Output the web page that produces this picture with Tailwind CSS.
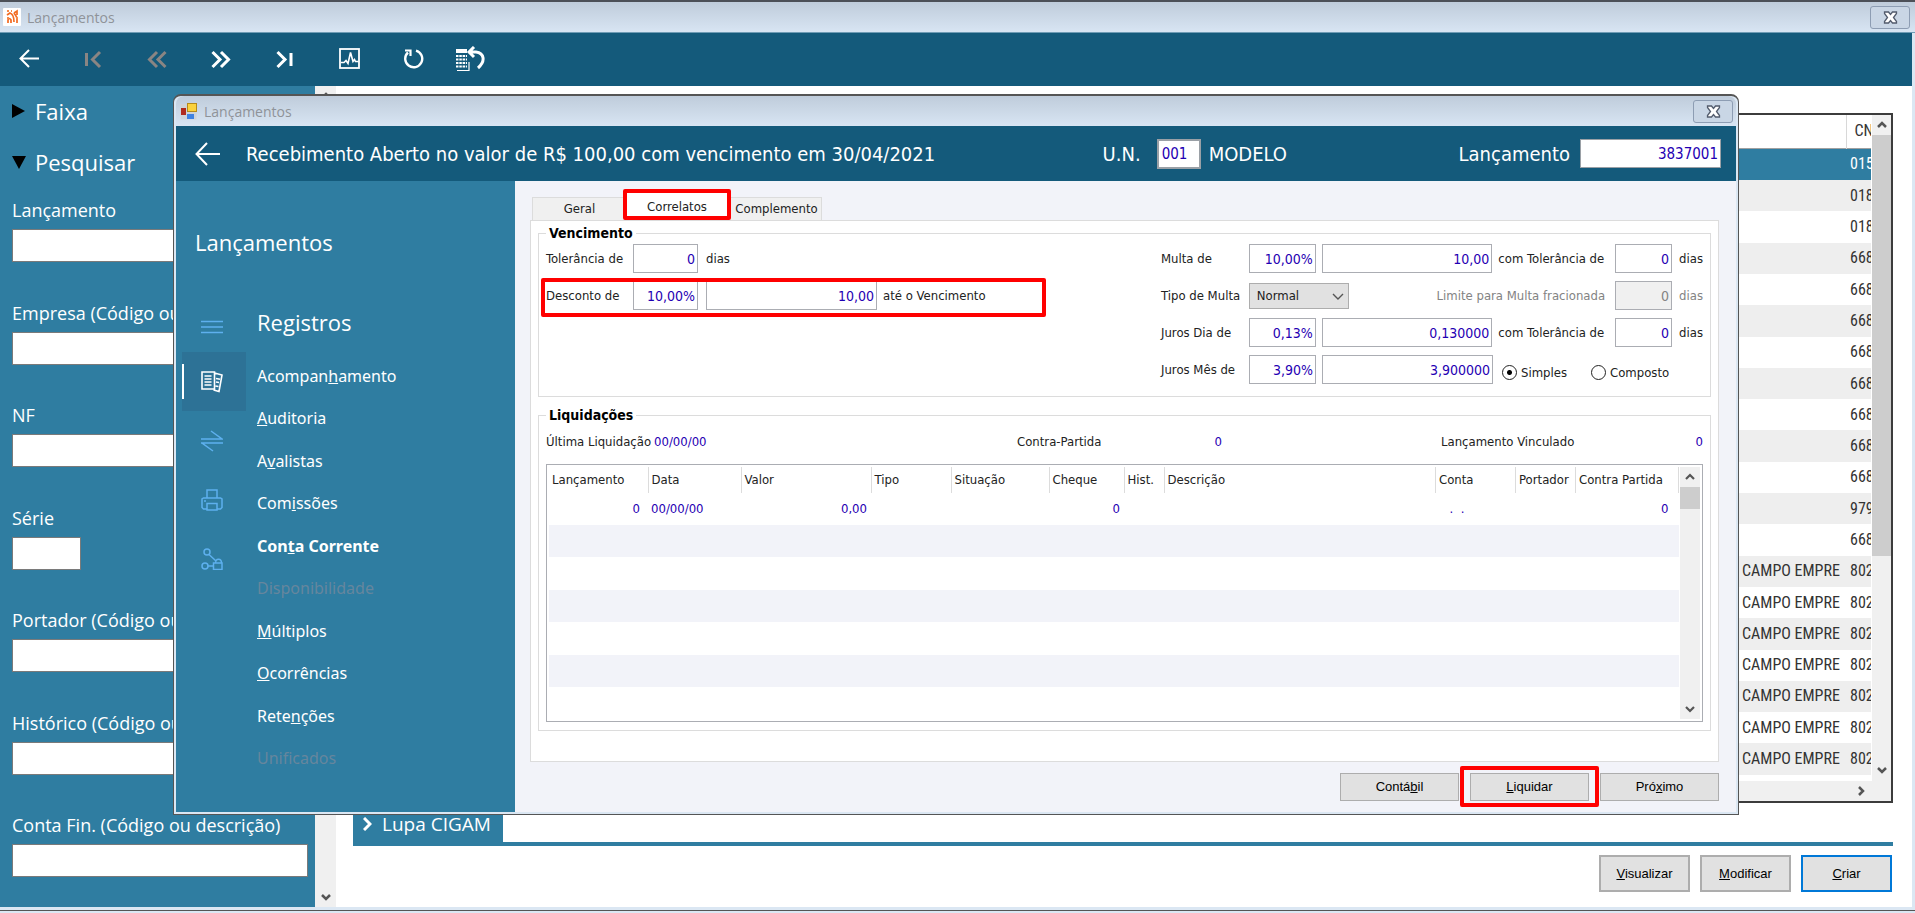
<!DOCTYPE html>
<html lang="pt-br">
<head>
    <meta charset="UTF-8">
    <meta name="viewport" content="width=device-width, initial-scale=1.0">
    <title>Lançamentos</title>
    <script src="https://cdn.jsdelivr.net/npm/@tailwindcss/browser@4"></script>
</head>
<body class="relative flex h-screen flex-col overflow-hidden bg-[#dbe7f3] font-['Open_Sans',sans-serif]">

    <!-- Janela principal -->
    <header class="flex h-[33px] shrink-0 items-center border-t-2 border-b border-t-[#4c5058] border-b-[#6f9cb5] bg-linear-to-b from-[#bfccdb] to-[#d8e5f3] pr-[5px] pl-[3px] text-sm text-[#8f9399]">
        <svg class="mr-[6px] h-[18px] w-[18px]" viewBox="0 0 18 18" fill="none">
            <rect width="18" height="18" rx="1" fill="#fff"/>
            <path d="M4 7l3-2c3 1 4 4 4 9M5 15v-3c0-2 2-2 3 0v3M14 15v-4c0-3-2-4-3-6M11 5l3-2v4" stroke="#f26a21" stroke-width="1.700"/>
            <path d="M4 3h2M4 10h2M8 3h1M14 9v2" stroke="#f58a4b" stroke-width="2"/>
        </svg>
        <h1 class="pt-[2px]">Lançamentos</h1>
        <button type="button" aria-label="Fechar" class="ml-auto flex h-[23px] w-[40px] items-center justify-center rounded-[3px] border border-[#8d9db3] bg-[#c9d6e5]">
            <svg class="h-[13px] w-[15px]" viewBox="0 0 15 13"><path d="M1.500 1h4l2 2.500 2-2.500h4v1.500L10.500 6.500l3 4V12h-4l-2-2.500-2 2.500h-4v-1.500l3-4-3-4z" fill="#fff" stroke="#525b6c" stroke-width="1.300"/></svg>
        </button>
    </header>

    <nav class="mr-[3px] flex h-[53px] shrink-0 items-center bg-[#145a7b] pb-[2px] text-white">
        <button type="button" aria-label="Voltar" class="flex w-[61px] justify-center pr-[3px]">
            <svg class="h-5 w-5" viewBox="0 0 20 20" fill="none" stroke="currentColor" stroke-width="2"><path d="M20 9.500H1.500M10 1L1.500 9.500 10 18"/></svg>
        </button>
        <button type="button" aria-label="Primeiro" disabled class="flex w-16 justify-center text-[#8a8583]">
            <svg class="h-5 w-5" viewBox="0 0 20 20" fill="none" stroke="currentColor" stroke-width="3"><path d="M3.500 4v13M17 3l-7.500 7.500L17 18"/></svg>
        </button>
        <button type="button" aria-label="Anterior" disabled class="flex w-16 justify-center text-[#8a8583]">
            <svg class="h-5 w-5" viewBox="0 0 20 20" fill="none" stroke="currentColor" stroke-width="3"><path d="M10 3l-7.500 7.500L10 18M18.500 3L11 10.500l7.500 7.500"/></svg>
        </button>
        <button type="button" aria-label="Seguinte" class="flex w-16 justify-center">
            <svg class="h-5 w-5" viewBox="0 0 20 20" fill="none" stroke="currentColor" stroke-width="3"><path d="M1.500 3L9 10.500 1.500 18M10 3l7.500 7.500L10 18"/></svg>
        </button>
        <button type="button" aria-label="Último" class="flex w-16 justify-center">
            <svg class="h-5 w-5" viewBox="0 0 20 20" fill="none" stroke="currentColor" stroke-width="3"><path d="M2.500 3l7.500 7.500L2.500 18M16 4v13"/></svg>
        </button>
        <button type="button" aria-label="Gráfico" class="flex w-16 justify-center">
            <svg class="h-[21px] w-[21px]" viewBox="0 0 21 21" fill="none" stroke="currentColor"><rect x="1" y="1" width="19" height="19" stroke-width="1.800"/><path d="M2 14.500h3l2-2 2 3 2.500-11 2.500 9 1.500-2 1 2h3" stroke-width="1.600"/></svg>
        </button>
        <button type="button" aria-label="Atualizar" class="flex w-16 justify-center">
            <svg class="h-[21px] w-[21px]" viewBox="0 0 21 21" fill="none" stroke="currentColor"><path d="M13 2.600A8.500 8.500 0 1 1 5 4.500" stroke-width="2.400"/><path d="M2 2.500h5.500V8" stroke-width="2.200"/></svg>
        </button>
        <button type="button" aria-label="Desfazer" class="flex w-[50px] justify-center">
            <svg class="h-[26px] w-[31px]" viewBox="0 0 31 26" fill="none" stroke="currentColor"><path d="M1 5h11" stroke-width="4"/><path d="M1 10h11M1 13.500h11M1 17h11M1 20.500h11" stroke-width="2" stroke-dasharray="2.500 .8"/><path d="M2 24.500h12V16" stroke-width="1.200"/><path d="M19 1l-5 5 5 5M14 6h7c8 1 10 9 2 16" stroke-width="3"/></svg>
        </button>
    </nav>

    <div class="mr-[3px] mb-[6px] flex min-h-0 flex-1 bg-white">
        <!-- Filtros -->
        <aside class="flex w-[315px] shrink-0 flex-col bg-[#2f7da1] px-3 pt-[10px] pb-[30px] text-white">
            <button type="button" class="flex items-center text-[22px] leading-[30px]">
                <svg class="mr-[9px] h-[14px] w-[14px]" viewBox="0 0 14 14"><path d="M0 0l13 7-13 7z"/></svg>
                Faixa
            </button>
            <button type="button" class="mt-[21px] flex items-center text-[22px] leading-[30px]">
                <svg class="mr-[9px] h-[14px] w-[14px]" viewBox="0 0 14 14"><path d="M0 1h14l-7 13z"/></svg>
                Pesquisar
            </button>
            <form class="mt-[21px] flex min-h-0 flex-1 flex-col justify-between text-lg leading-6">
                <div>
                    <label for="f-lanc" class="block">Lançamento</label>
                    <input id="f-lanc" type="text" class="mt-[7px] block h-[33px] w-[296px] border border-[#7a7a7a] bg-white">
                </div>
                <div>
                    <label for="f-emp" class="block">Empresa (Código ou nome)</label>
                    <input id="f-emp" type="text" class="mt-[7px] block h-[33px] w-[296px] border border-[#7a7a7a] bg-white">
                </div>
                <div>
                    <label for="f-nf" class="block">NF</label>
                    <input id="f-nf" type="text" class="mt-[7px] block h-[33px] w-[296px] border border-[#7a7a7a] bg-white">
                </div>
                <div>
                    <label for="f-serie" class="block">Série</label>
                    <input id="f-serie" type="text" class="mt-[7px] block h-[33px] w-[69px] border border-[#7a7a7a] bg-white">
                </div>
                <div>
                    <label for="f-port" class="block">Portador (Código ou descrição)</label>
                    <input id="f-port" type="text" class="mt-[7px] block h-[33px] w-[296px] border border-[#7a7a7a] bg-white">
                </div>
                <div>
                    <label for="f-hist" class="block">Histórico (Código ou descrição)</label>
                    <input id="f-hist" type="text" class="mt-[7px] block h-[33px] w-[296px] border border-[#7a7a7a] bg-white">
                </div>
                <div>
                    <label for="f-conta" class="block">Conta Fin. (Código ou descrição)</label>
                    <input id="f-conta" type="text" class="mt-[7px] block h-[33px] w-[296px] border border-[#7a7a7a] bg-white">
                </div>
            </form>
        </aside>
        <div class="flex w-[21px] shrink-0 flex-col items-center justify-between bg-[#f0f0f0] py-[5px] text-[#555]">
            <svg class="h-[10px] w-[10px]" viewBox="0 0 10 10" fill="none" stroke="currentColor" stroke-width="2.500"><path d="M1 7l4-4 4 4"/></svg>
            <svg class="h-[10px] w-[10px]" viewBox="0 0 10 10" fill="none" stroke="currentColor" stroke-width="2.500"><path d="M1 3l4 4 4-4"/></svg>
        </div>

        <main class="flex min-w-0 flex-1 flex-col pt-[27px] pr-[19px] pl-[17px]">
            <div class="flex min-h-0 flex-1 flex-col border-2 border-[#3c3c3c]">
                <div class="flex min-h-0 flex-1">
                    <div class="min-w-0 flex-1 overflow-hidden">
                        <table class="h-[660px] w-full table-fixed border-collapse font-['Roboto_Condensed','Liberation_Sans',sans-serif] text-base leading-5 whitespace-nowrap text-[#333]">
                            <colgroup><col><col class="w-[119px]"><col class="w-[25px]"></colgroup>
                            <thead>
                                <tr class="h-[33px] border-b border-[#a0a0a0]"><th></th><th></th><th class="overflow-hidden border-l border-[#d8d8d8] pl-2 text-left font-normal">CNPJ</th></tr>
                            </thead>
                            <tbody id="grid-rows"></tbody>
                        </table>
                    </div>
                    <div class="ml-px flex w-[19px] shrink-0 flex-col items-center bg-[#f0f0f0] text-[#555]">
                        <svg class="my-[5px] h-[10px] w-[10px] shrink-0" viewBox="0 0 10 10" fill="none" stroke="currentColor" stroke-width="2.500"><path d="M1 7l4-4 4 4"/></svg>
                        <div class="h-[421px] w-full bg-[#cdcdcd]"></div>
                        <svg class="mt-auto mb-[6px] h-[10px] w-[10px]" viewBox="0 0 10 10" fill="none" stroke="currentColor" stroke-width="2.500"><path d="M1 3l4 4 4-4"/></svg>
                    </div>
                </div>
                <div class="flex h-5 shrink-0 items-center justify-end bg-[#f0f0f0] pr-[25px] text-[#555]">
                    <svg class="h-[10px] w-[10px]" viewBox="0 0 10 10" fill="none" stroke="currentColor" stroke-width="2.500"><path d="M3 1l4 4-4 4"/></svg>
                </div>
            </div>
            <div class="mt-2 flex h-[35px] shrink-0 border-b-4 border-[#2f7da1]">
                <button type="button" class="flex w-[150px] items-center bg-[#2f7da1] pb-[6px] pl-[10px] text-[19px] leading-6 text-white">
                    <svg class="mr-[10px] h-[14px] w-[9px]" viewBox="0 0 9 14" fill="none" stroke="currentColor" stroke-width="3"><path d="M1 1l6 6-6 6"/></svg>
                    Lupa CIGAM
                </button>
            </div>
            <div class="mt-[9px] mb-[15px] flex h-[37px] shrink-0 justify-end gap-[10px] pr-px font-['Liberation_Sans',sans-serif] text-[13px]">
                <button type="button" class="w-[91px] border-2 border-[#adadad] bg-[#e1e1e1]"><u>V</u>isualizar</button>
                <button type="button" class="w-[91px] border-2 border-[#adadad] bg-[#e1e1e1]"><u>M</u>odificar</button>
                <button type="button" class="w-[91px] border-2 border-[#0078d7] bg-[#e1e1e1]"><u>C</u>riar</button>
            </div>
        </main>
    </div>
    <div class="absolute inset-x-0 bottom-[2px] h-px bg-[#555]"></div>

    <!-- Janela do lançamento -->
    <section class="absolute top-[94px] right-[176px] bottom-[98px] left-[173px] flex flex-col rounded-t-lg border border-t-2 border-[#555] bg-[#dbe7f3] px-[2px] pb-[2px] text-white">
        <header class="flex h-[30px] shrink-0 items-center pr-[3px] pl-1 text-sm text-[#8f9399] rounded-t-lg bg-linear-to-b from-[#bfccdb] to-[#d8e5f3]">
            <svg class="mr-[7px] h-[17px] w-[17px]" viewBox="0 0 17 17"><rect x=".5" y="1" width="16" height="15.500" fill="#cfd3d8"/><rect x="7" y="0" width="10" height="9" fill="#b58a1a"/><rect x="8" y="1" width="8" height="7" fill="#fbd23c"/><rect x="1" y="5" width="5" height="7" fill="#b02a1c"/><rect x="7" y="11" width="7" height="5" fill="#3f82e0"/></svg>
            <h2 class="pt-[2px]">Lançamentos</h2>
            <button type="button" aria-label="Fechar" class="ml-auto flex h-[23px] w-[40px] items-center justify-center rounded-[3px] border border-[#8d9db3] bg-[#c9d6e5]">
                <svg class="h-[13px] w-[15px]" viewBox="0 0 15 13"><path d="M1.500 1h4l2 2.500 2-2.500h4v1.500L10.500 6.500l3 4V12h-4l-2-2.500-2 2.500h-4v-1.500l3-4-3-4z" fill="#fff" stroke="#525b6c" stroke-width="1.300"/></svg>
            </button>
        </header>

        <div class="flex h-[55px] shrink-0 items-center bg-[#145a7b] pr-[15px] pl-[19px] font-['DejaVu_Sans_Condensed','DejaVu_Sans',sans-serif] text-xl">
            <button type="button" aria-label="Voltar">
                <svg class="h-6 w-[25px]" viewBox="0 0 25 24" fill="none" stroke="currentColor" stroke-width="2"><path d="M25 12H1.500M12 1L1.500 12 12 23"/></svg>
            </button>
            <span class="ml-[26px]">Recebimento Aberto no valor de R$ 100,00 com vencimento em 30/04/2021</span>
            <div class="ml-auto flex w-[356px] items-center">
                <label for="un">U.N.</label>
                <input id="un" type="text" value="001" class="ml-4 h-[30px] w-[44px] border-2 border-[#9aa0a6] bg-white px-[3px] text-[15px] text-[#1f00b3]">
                <span class="ml-2">MODELO</span>
            </div>
            <label for="lanc">Lançamento</label>
            <input id="lanc" type="text" value="3837001" class="ml-[10px] h-[29px] w-[141px] border border-[#9aa0a6] bg-white px-[2px] text-right text-[15px] text-[#1f00b3]">
        </div>

        <div class="flex min-h-0 flex-1">
            <aside class="flex w-[339px] shrink-0 flex-col bg-[#2f7da1]">
                <h3 class="mt-[45px] ml-[19px] text-[22px] leading-8">Lançamentos</h3>
                <div class="mt-[40px] flex pl-[6px]">
                    <div class="flex w-[64px] flex-col text-[#5eb0ee]">
                        <button type="button" aria-label="Menu" class="flex h-[54px] items-center pl-[19px] pt-[4px]">
                            <svg class="h-[22px] w-[22px]" viewBox="0 0 22 22" fill="none" stroke="currentColor" stroke-width="1.500"><path d="M0 5.500h22M0 11h22M0 16.500h22"/></svg>
                        </button>
                        <button type="button" aria-label="Registros" class="flex h-[59px] items-center bg-[#2d7296] text-white">
                            <span class="h-[35px] w-[2px] bg-white"></span>
                            <svg class="ml-[17px] h-[22px] w-[22px]" viewBox="0 0 22 22" fill="none" stroke="currentColor" stroke-width="1.600"><path d="M1 1h12.500v17H1zM3.500 5h7M3.500 8h7M3.500 11h7M3.500 14h7M13.500 2l7.500 2L18 20.500l-5.500-1.500M15 7.500l4 .700M15 11l3 .500M14.500 15l3 .500"/></svg>
                        </button>
                        <button type="button" aria-label="Movimentos" class="flex h-[59px] items-center pl-[19px]">
                            <svg class="h-[22px] w-[22px]" viewBox="0 0 22 22" fill="none" stroke="currentColor" stroke-width="1.500"><path d="M0 9h21L10 1M0 13h22M22 13H1l11 8"/></svg>
                        </button>
                        <button type="button" aria-label="Imprimir" class="flex h-[59px] items-center pl-[19px]">
                            <svg class="h-[22px] w-[22px]" viewBox="0 0 22 22" fill="none" stroke="currentColor" stroke-width="1.500"><path d="M6 9V1h10v8M6 20H2.500L1 18.500V10l1.500-1h17L21 10v8.500L19.500 20H16M6 14.500h10V21H6zM3 12h2"/></svg>
                        </button>
                        <button type="button" aria-label="Vínculos" class="flex h-[59px] items-center pl-[19px]">
                            <svg class="h-[22px] w-[22px]" viewBox="0 0 22 22" fill="none" stroke="currentColor" stroke-width="1.500"><circle cx="6" cy="4" r="3"/><circle cx="4" cy="18" r="3"/><path d="M8 6.500l7 6.500M7 18h5.500M12.500 15H21v6.500h-8.500zM14.500 15c0-5 6-5 6 0"/></svg>
                        </button>
                    </div>
                    <div class="ml-[11px] flex flex-col">
                        <h4 class="mt-[8px] text-[22px] leading-8">Registros</h4>
                        <ul class="mt-[26px] flex h-[406px] flex-col justify-between font-['Noto_Sans','Open_Sans',sans-serif] text-base leading-6">
                            <li><a href="#">Acompan<u>h</u>amento</a></li>
                            <li><a href="#"><u>A</u>uditoria</a></li>
                            <li><a href="#">A<u>v</u>alistas</a></li>
                            <li><a href="#">Com<u>i</u>ssões</a></li>
                            <li><a href="#" class="font-bold">Con<u>t</u>a Corrente</a></li>
                            <li><a href="#" class="text-[#66869d]">Disponibilidade</a></li>
                            <li><a href="#"><u>M</u>últiplos</a></li>
                            <li><a href="#"><u>O</u>corrências</a></li>
                            <li><a href="#">Rete<u>n</u>ções</a></li>
                            <li><a href="#" class="text-[#66869d]">Unificados</a></li>
                        </ul>
                    </div>
                </div>
            </aside>

            <div class="flex min-w-0 flex-1 flex-col bg-[#f2f3f9] pr-[17px] pl-[15px] font-['DejaVu_Sans_Condensed','DejaVu_Sans',sans-serif] text-[13px] leading-5 text-[#222]">
                <div class="flex h-[39px] shrink-0 items-end pl-[2px]">
                    <button type="button" class="h-[23px] w-[95px] border border-b-0 border-[#dcdcdc] bg-[#f0f0f0]">Geral</button>
                    <div class="relative h-[27px] w-[100px]">
                        <button type="button" class="h-full w-full bg-white">Correlatos</button>
                        <div class="absolute -inset-x-1 -top-1 bottom-0 rounded-[2px] border-4 border-[#ff0000]"></div>
                    </div>
                    <button type="button" class="h-[23px] w-[95px] border border-b-0 border-[#dcdcdc] bg-[#f0f0f0] pl-1">Complemento</button>
                </div>

                <div class="flex min-h-0 flex-1 flex-col border border-[#dcdcdc] bg-white px-[7px] pt-[2px] pb-[30px]">
                    <fieldset class="relative h-[174px] shrink-0 border border-[#dcdcdc] pr-[7px] pl-[7px]">
                        <legend class="px-[3px] text-sm leading-5 font-bold text-black">Vencimento</legend>
                        <div class="flex pt-px">
                            <div class="flex flex-col gap-2">
                                <div class="flex h-[29px] items-center">
                                    <label for="tol" class="w-[87px]">Tolerância de</label>
                                    <input id="tol" type="text" value="0" class="h-[29px] w-[65px] border border-[#abadb3] bg-white px-[2px] text-right text-sm text-[#1f00b3]">
                                    <span class="ml-2">dias</span>
                                </div>
                                <div class="flex h-[29px] items-center">
                                    <label for="desc" class="w-[87px]">Desconto de</label>
                                    <input id="desc" type="text" value="10,00%" class="h-[29px] w-[65px] border border-[#abadb3] bg-white px-[2px] text-right text-sm text-[#1f00b3]">
                                    <input type="text" value="10,00" aria-label="Valor do desconto" class="ml-2 h-[29px] w-[171px] border border-[#abadb3] bg-white px-[2px] text-right text-sm text-[#1f00b3]">
                                    <span class="ml-[6px]">até o Vencimento</span>
                                </div>
                            </div>
                            <div class="ml-auto flex w-[542px] flex-col gap-2">
                                <div class="flex h-[29px] items-center">
                                    <label for="multa" class="w-[88px]">Multa de</label>
                                    <input id="multa" type="text" value="10,00%" class="h-[29px] w-[67px] border border-[#abadb3] bg-white px-[2px] text-right text-sm text-[#1f00b3]">
                                    <input type="text" value="10,00" aria-label="Valor da multa" class="ml-[6px] h-[29px] w-[171px] border border-[#abadb3] bg-white px-[2px] text-right text-sm text-[#1f00b3]">
                                    <label for="multa-tol" class="ml-[6px] w-[117px]">com Tolerância de</label>
                                    <input id="multa-tol" type="text" value="0" class="h-[29px] w-[57px] border border-[#abadb3] bg-white px-[2px] text-right text-sm text-[#1f00b3]">
                                    <span class="ml-[7px]">dias</span>
                                </div>
                                <div class="flex h-[29px] items-center">
                                    <label for="tipo" class="w-[88px]">Tipo de Multa</label>
                                    <div class="relative">
                                        <select id="tipo" class="block h-[26px] w-[100px] appearance-none border border-[#adadad] bg-[#e1e1e1] px-[7px]"><option>Normal</option></select>
                                        <svg class="pointer-events-none absolute top-[10px] right-[5px] h-[7px] w-3" viewBox="0 0 12 7" fill="none" stroke="#555" stroke-width="1.400"><path d="M1 1l5 5 5-5"/></svg>
                                    </div>
                                    <label for="limite" class="w-[267px] pr-[10px] text-right text-[#838383]">Limite para Multa fracionada</label>
                                    <input id="limite" type="text" value="0" disabled class="h-[29px] w-[57px] border border-[#abadb3] bg-[#f0f0f0] px-[2px] text-right text-sm text-[#838383]">
                                    <span class="ml-[7px] text-[#838383]">dias</span>
                                </div>
                                <div class="flex h-[29px] items-center">
                                    <label for="jdia" class="w-[88px]">Juros Dia de</label>
                                    <input id="jdia" type="text" value="0,13%" class="h-[29px] w-[67px] border border-[#abadb3] bg-white px-[2px] text-right text-sm text-[#1f00b3]">
                                    <input type="text" value="0,130000" aria-label="Juros por dia" class="ml-[6px] h-[29px] w-[171px] border border-[#abadb3] bg-white px-[2px] text-right text-sm text-[#1f00b3]">
                                    <label for="jdia-tol" class="ml-[6px] w-[117px]">com Tolerância de</label>
                                    <input id="jdia-tol" type="text" value="0" class="h-[29px] w-[57px] border border-[#abadb3] bg-white px-[2px] text-right text-sm text-[#1f00b3]">
                                    <span class="ml-[7px]">dias</span>
                                </div>
                                <div class="flex h-[29px] items-center">
                                    <label for="jmes" class="w-[88px]">Juros Mês de</label>
                                    <input id="jmes" type="text" value="3,90%" class="h-[29px] w-[67px] border border-[#abadb3] bg-white px-[2px] text-right text-sm text-[#1f00b3]">
                                    <input type="text" value="3,900000" aria-label="Juros por mês" class="ml-[6px] h-[29px] w-[171px] border border-[#abadb3] bg-white px-[2px] text-right text-sm text-[#1f00b3]">
                                    <label class="ml-[9px] flex w-[89px] items-center gap-1 pt-[6px]"><input type="radio" name="juros" checked class="h-[15px] w-[15px] appearance-none rounded-full border border-[#222] checked:bg-[radial-gradient(circle,#000_2px,#fff_3px)]">Simples</label>
                                    <label class="flex items-center gap-1 pt-[6px]"><input type="radio" name="juros" class="h-[15px] w-[15px] appearance-none rounded-full border border-[#222] checked:bg-[radial-gradient(circle,#000_2px,#fff_3px)]">Composto</label>
                                </div>
                            </div>
                        </div>
                        <!-- destaque da linha de desconto -->
                        <div class="absolute top-[35px] left-[2px] h-[39px] w-[505px] rounded-[2px] border-4 border-[#ff0000]"></div>
                    </fieldset>

                    <fieldset class="mt-2 flex min-h-0 flex-1 flex-col border border-[#dcdcdc] px-[7px] pb-2">
                        <legend class="px-[3px] text-sm leading-5 font-bold text-black">Liquidações</legend>
                        <div class="flex h-[39px] items-center pb-[5px]">
                            <span class="w-[108px]">Última Liquidação</span>
                            <span class="text-[#1f00b3]">00/00/00</span>
                            <span class="ml-auto w-[89px]">Contra-Partida</span>
                            <span class="w-[116px] text-right text-[#1f00b3]">0</span>
                            <span class="ml-[219px] w-[134px]">Lançamento Vinculado</span>
                            <span class="w-[128px] text-right text-[#1f00b3]">0</span>
                        </div>
                        <div class="flex min-h-0 flex-1 border border-[#abadb3] p-[2px]">
                            <table class="min-w-0 flex-1 table-fixed border-collapse">
                                <colgroup>
                                    <col class="w-[99px]"><col class="w-[93px]"><col class="w-[130px]"><col class="w-[80px]"><col class="w-[98px]"><col class="w-[75px]"><col class="w-[40px]"><col><col class="w-[80px]"><col class="w-[60px]"><col class="w-[103px]">
                                </colgroup>
                                <thead>
                                    <tr class="h-[26px] whitespace-nowrap *:border-r *:border-[#dcdcdc] *:p-0 *:pl-[3px] *:text-left *:font-normal">
                                        <th>Lançamento</th><th>Data</th><th>Valor</th><th>Tipo</th><th>Situação</th><th>Cheque</th><th>Hist.</th><th>Descrição</th><th>Conta</th><th>Portador</th><th>Contra Partida</th>
                                    </tr>
                                </thead>
                                <tbody>
                                    <tr class="h-[32px] text-[#1f00b3] *:p-0"><td class="text-right"><span class="pr-2">0</span></td><td><span class="pl-[3px]">00/00/00</span></td><td class="text-right"><span class="pr-1">0,00</span></td><td></td><td></td><td class="text-right"><span class="pr-1">0</span></td><td></td><td></td><td><span class="pl-[14px]">. &nbsp;.</span></td><td></td><td class="text-right"><span class="pr-[10px]">0</span></td></tr>
                                    <tr class="h-[32px] bg-[#f2f3f9]"><td colspan="11"></td></tr>
                                    <tr class="h-[33px]"><td colspan="11"></td></tr>
                                    <tr class="h-[32px] bg-[#f2f3f9]"><td colspan="11"></td></tr>
                                    <tr class="h-[33px]"><td colspan="11"></td></tr>
                                    <tr class="h-[32px] bg-[#f2f3f9]"><td colspan="11"></td></tr>
                                    <tr class="h-[32px]"><td colspan="11"></td></tr>
                                </tbody>
                            </table>
                            <div class="ml-px flex w-5 shrink-0 flex-col items-center bg-[#f0f0f0] text-[#555]">
                                <svg class="my-[5px] h-[10px] w-[10px] shrink-0" viewBox="0 0 10 10" fill="none" stroke="currentColor" stroke-width="2.200"><path d="M1 7l4-4 4 4"/></svg>
                                <div class="h-[22px] w-full bg-[#cdcdcd]"></div>
                                <svg class="mt-auto mb-[5px] h-[10px] w-[10px]" viewBox="0 0 10 10" fill="none" stroke="currentColor" stroke-width="2.200"><path d="M1 3l4 4 4-4"/></svg>
                            </div>
                        </div>
                    </fieldset>
                </div>

                <div class="mt-[11px] mb-[11px] flex h-[28px] shrink-0 justify-end gap-[11px] font-['Liberation_Sans',sans-serif] text-black">
                    <button type="button" class="w-[119px] border border-[#adadad] bg-[#e1e1e1]">Contá<u>b</u>il</button>
                    <div class="relative">
                        <button type="button" class="h-full w-[119px] border border-[#adadad] bg-[#e1e1e1]"><u>L</u>iquidar</button>
                        <div class="absolute -inset-x-[10px] -top-[7px] -bottom-[6px] rounded-[2px] border-4 border-[#ff0000]"></div>
                    </div>
                    <button type="button" class="w-[119px] border border-[#adadad] bg-[#e1e1e1]">Pró<u>x</u>imo</button>
                </div>
            </div>
        </div>
    </section>

    <script>
        // [empresa, início do CNPJ]
        const rows = [
            ['', '015'], ['', '018'], ['', '018'], ['', '668'], ['', '668'], ['', '668'], ['', '668'],
            ['', '668'], ['', '668'], ['', '668'], ['', '668'], ['', '979'], ['', '668'],
            ['CAMPO EMPRE', '802'], ['CAMPO EMPRE', '802'], ['CAMPO EMPRE', '802'], ['CAMPO EMPRE', '802'],
            ['CAMPO EMPRE', '802'], ['CAMPO EMPRE', '802'], ['CAMPO EMPRE', '802'],
        ];
        document.getElementById('grid-rows').innerHTML = rows.map(([name, cnpj], i) => {
            const color = i === 0 ? 'bg-[#2f7da1] text-white' : i % 2 ? 'bg-[#eeeeee]' : 'bg-white';
            return `<tr class="${color}"><td class="p-0"></td><td class="p-0 pl-[15px]">${name}</td><td class="overflow-hidden p-0 pl-1">${cnpj}</td></tr>`;
        }).join('');
    </script>
</body>
</html>
